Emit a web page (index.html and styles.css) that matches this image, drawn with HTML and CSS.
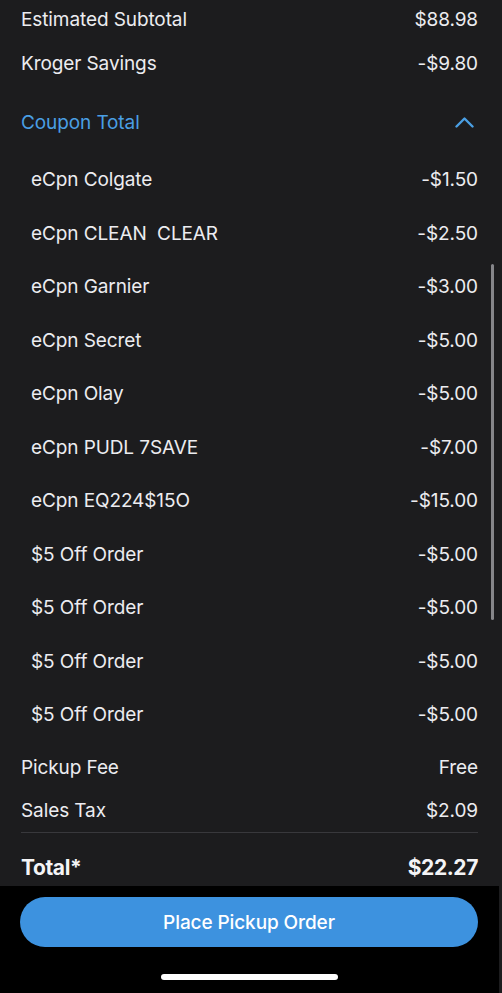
FILE: index.html
```html
<!DOCTYPE html>
<html lang="en">
<head>
<meta charset="utf-8">
<title>Order Summary</title>
<link rel="stylesheet" href="styles.css">
</head>
<body>
<div class="app">
  <main class="summary">
    <div class="row"><span>Estimated Subtotal</span><span>$88.98</span></div>
    <div class="row"><span>Kroger Savings</span><span>-$9.80</span></div>
    <div class="coupon-head">
      <span>Coupon Total</span>
      <svg class="chev" width="19" height="12" viewBox="0 0 19 12"><path d="M1.5 10.5 L9.5 2.5 L17.5 10.5" fill="none" stroke="currentColor" stroke-width="2.4" stroke-linecap="round" stroke-linejoin="round"/></svg>
    </div>
    <div class="coupons">
      <div class="coupon"><span>eCpn Colgate</span><span>-$1.50</span></div>
      <div class="coupon"><span>eCpn CLEAN&nbsp; CLEAR</span><span>-$2.50</span></div>
      <div class="coupon"><span>eCpn Garnier</span><span>-$3.00</span></div>
      <div class="coupon"><span>eCpn Secret</span><span>-$5.00</span></div>
      <div class="coupon"><span>eCpn Olay</span><span>-$5.00</span></div>
      <div class="coupon"><span>eCpn PUDL 7SAVE</span><span>-$7.00</span></div>
      <div class="coupon"><span>eCpn EQ224$15O</span><span>-$15.00</span></div>
      <div class="coupon"><span>$5 Off Order</span><span>-$5.00</span></div>
      <div class="coupon"><span>$5 Off Order</span><span>-$5.00</span></div>
      <div class="coupon"><span>$5 Off Order</span><span>-$5.00</span></div>
      <div class="coupon"><span>$5 Off Order</span><span>-$5.00</span></div>
    </div>
    <div class="row small"><span>Pickup Fee</span><span>Free</span></div>
    <div class="row small"><span>Sales Tax</span><span>$2.09</span></div>
    <div class="divider"></div>
    <div class="total"><span>Total*</span><span>$22.27</span></div>
    <div class="scrollbar"></div>
  </main>
  <footer class="footer">
    <button class="cta">Place Pickup Order</button>
    <div class="home"></div>
  </footer>
</div>
</body>
</html>
```
FILE: styles.css
```css
* { box-sizing: border-box; }
html, body {
  margin: 0;
  padding: 0;
  background: #1c1c1e;
}
body {
  font-family: Inter, "Noto Sans", "Liberation Sans", sans-serif;
  color: #ececf0;
  -webkit-font-smoothing: antialiased;
}
.app {
  width: 499px;
  height: 993px;
  display: flex;
  flex-direction: column;
  overflow: hidden;
}
.summary {
  position: relative;
  height: 886px;
  overflow: hidden;
  background: #1c1c1e;
  padding: 0 21px 0 21px;
}
.row, .coupon, .coupon-head, .total {
  display: flex;
  justify-content: space-between;
  align-items: center;
  font-size: 19px;
  letter-spacing: -0.1px;
}
.row {
  height: 44px;
}
.row:first-child {
  margin-top: -3px;
}
.row.small {
  height: 43px;
}
.coupons + .row { margin-top: 4px; }
.coupon-head {
  margin-top: 6px;
  height: 62px;
  color: #4a9fe4;
  padding-right: 4px;
}
.chev {
  color: #4a9fe4;
  display: block;
}
.coupons {
  padding-left: 10px;
}
.coupon {
  height: 53.5px;
}
.divider {
  height: 1px;
  background: #38383c;
}
.total {
  height: 70px;
  font-weight: 700;
  font-size: 21px;
  letter-spacing: -0.4px;
  color: #f4f4f6;
}
.scrollbar {
  position: absolute;
  right: 5px;
  top: 264px;
  width: 3px;
  height: 356px;
  border-radius: 2px;
  background: #86868a;
}
.footer {
  flex: 1;
  background: #000;
  display: flex;
  flex-direction: column;
  align-items: center;
  padding: 11px 21px 0 20px;
}
.cta {
  width: 100%;
  height: 50px;
  border: 0;
  border-radius: 25px;
  background: #3d92df;
  color: #fff;
  font-family: inherit;
  font-size: 19px;
  font-weight: 500;
  letter-spacing: -0.1px;
}
.home {
  margin-top: 27px;
  width: 177px;
  height: 6px;
  border-radius: 3px;
  background: #fff;
}
```
